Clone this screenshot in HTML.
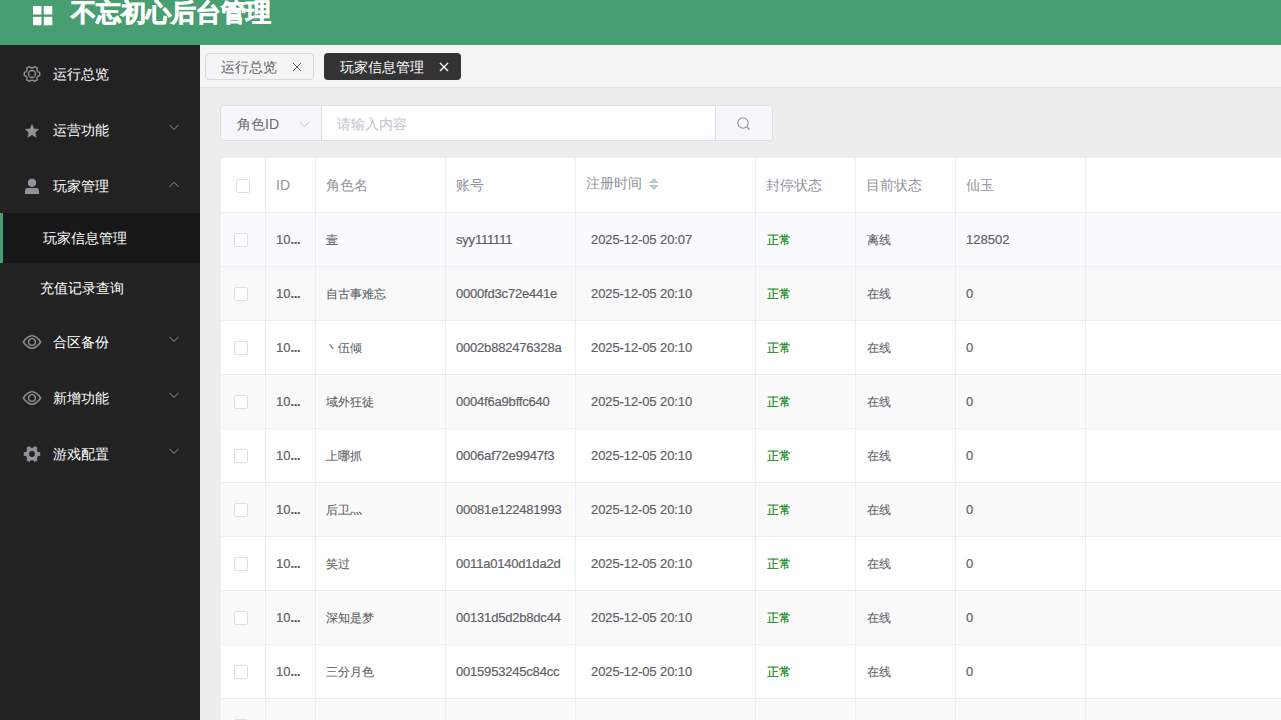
<!DOCTYPE html>
<html><head><meta charset="utf-8">
<style>
*{box-sizing:border-box;margin:0;padding:0}
html,body{width:1281px;height:720px;overflow:hidden;background:#ededed;font-family:"Liberation Sans",sans-serif}
.abs{position:absolute}
#hdr{left:0;top:0;width:1281px;height:45px;background:#479e71}
#title{left:71px;top:-3px;font-size:25px;font-weight:bold;-webkit-text-stroke:0.8px #fff;color:#fff;line-height:30px;white-space:nowrap}
#side{left:0;top:45px;width:200px;height:675px;background:#222}
.mi{position:absolute;left:0;width:200px;height:56px;color:#fff;font-size:14px}
.mi .t{position:absolute;left:53px;top:1px;line-height:56px}
.mi svg{position:absolute}
.sub{position:absolute;left:0;width:200px;height:50px;color:#fff;font-size:14px}
.sub .t{position:absolute;left:40px;top:0;line-height:50px}
#tabs{left:200px;top:45px;width:1081px;height:43px;background:#f5f5f5;border-bottom:1px solid #e0e0e0}
.tab{position:absolute;top:8px;height:27px;border-radius:4px;font-size:14px;line-height:25px}

#srch{left:220px;top:105px;width:553px;height:36px;border:1px solid #dcdfe6;border-radius:4px;background:#fff}
#tbl{left:220px;top:157px;width:1061px;height:563px;background:#fff}
.cell{position:absolute;font-size:13px;color:#606266;white-space:nowrap;-webkit-text-stroke:0.2px currentColor}
.hcell{position:absolute;font-size:14px;color:#909399;white-space:nowrap}
.vl{position:absolute;width:1px;background:#ebeef5}
.hl{position:absolute;height:1px;background:#ebeef5}
.cb{position:absolute;width:14px;height:14px;border:1px solid #dcdfe6;border-radius:2px;background:#fff}
</style></head><body>

<div id="hdr" class="abs">
<svg class="abs" style="left:33px;top:6px" width="20" height="20" viewBox="0 0 20 20" fill="#fff"><rect x="0" y="0" width="8.5" height="8.5"/><rect x="10.8" y="0" width="8.5" height="8.5"/><rect x="0" y="10.8" width="8.5" height="8.5"/><rect x="10.8" y="10.8" width="8.5" height="8.5"/></svg>
<div id="title" class="abs">不忘初心后台管理</div></div>
<div id="side" class="abs">
<div class="mi" style="top:0px"><svg style="left:23px;top:20px" width="18" height="18" viewBox="0 0 18 18"><path d="M14.97 11.00 L16.71 10.70 L16.71 7.30 L14.97 7.00 L14.74 6.41 L14.46 5.85 L14.11 5.32 L13.72 4.83 L14.33 3.17 L11.39 1.47 L10.26 2.83 L9.63 2.73 L9.00 2.70 L8.37 2.73 L7.74 2.83 L6.61 1.47 L3.67 3.17 L4.28 4.83 L3.89 5.32 L3.54 5.85 L3.26 6.41 L3.03 7.00 L1.29 7.30 L1.29 10.70 L3.03 11.00 L3.26 11.59 L3.54 12.15 L3.89 12.68 L4.28 13.17 L3.67 14.83 L6.61 16.53 L7.74 15.17 L8.37 15.27 L9.00 15.30 L9.63 15.27 L10.26 15.17 L11.39 16.53 L14.33 14.83 L13.72 13.17 L14.11 12.68 L14.46 12.15 L14.74 11.59Z" fill="none" stroke="#909399" stroke-width="1.3" stroke-linejoin="round"/><circle cx="9" cy="9" r="3.5" fill="none" stroke="#909399" stroke-width="1.3"/></svg><span class="t">运行总览</span></div>
<div class="mi" style="top:56px"><svg style="left:25px;top:22.8px" width="14" height="14" viewBox="0 0 14 14"><path d="M7.00 0.50 L8.88 4.91 L13.66 5.34 L10.04 8.49 L11.11 13.16 L7.00 10.70 L2.89 13.16 L3.96 8.49 L0.34 5.34 L5.12 4.91Z" fill="#909399" stroke="#909399" stroke-width="0.6" stroke-linejoin="round"/></svg><span class="t">运营功能</span><svg style="left:169px;top:23px" width="10" height="7" viewBox="0 0 10 7"><path d="M0.5 0.8 L5 5.5 L9.5 0.8" fill="none" stroke="#909399" stroke-width="1"/></svg></div>
<div class="mi" style="top:112px"><svg style="left:24px;top:21px" width="16" height="17" viewBox="0 0 16 17"><circle cx="8" cy="4.8" r="4.1" fill="#909399"/><path d="M1 13.2 Q1 10 4 10 L12 10 Q15 10 15 13.2 L15 16 L1 16Z" fill="#909399"/></svg><span class="t">玩家管理</span><svg style="left:169px;top:24px" width="10" height="7" viewBox="0 0 10 7"><path d="M0.5 5.8 L5 1.2 L9.5 5.8" fill="none" stroke="#909399" stroke-width="1"/></svg></div>
<div class="mi" style="top:268px"><svg style="left:22px;top:21px" width="20" height="16" viewBox="0 0 20 16"><path d="M1.3 8 Q10 -4.5 18.7 8 Q10 20.5 1.3 8Z" fill="none" stroke="#909399" stroke-width="1.4"/><circle cx="10" cy="8" r="3.4" fill="none" stroke="#909399" stroke-width="1.4"/></svg><span class="t">合区备份</span><svg style="left:169px;top:23px" width="10" height="7" viewBox="0 0 10 7"><path d="M0.5 0.8 L5 5.5 L9.5 0.8" fill="none" stroke="#909399" stroke-width="1"/></svg></div>
<div class="mi" style="top:324px"><svg style="left:22px;top:21px" width="20" height="16" viewBox="0 0 20 16"><path d="M1.3 8 Q10 -4.5 18.7 8 Q10 20.5 1.3 8Z" fill="none" stroke="#909399" stroke-width="1.4"/><circle cx="10" cy="8" r="3.4" fill="none" stroke="#909399" stroke-width="1.4"/></svg><span class="t">新增功能</span><svg style="left:169px;top:23px" width="10" height="7" viewBox="0 0 10 7"><path d="M0.5 0.8 L5 5.5 L9.5 0.8" fill="none" stroke="#909399" stroke-width="1"/></svg></div>
<div class="mi" style="top:380px"><svg style="left:23px;top:20.2px" width="18" height="18" viewBox="0 0 18 18"><path d="M14.97 11.00 L17.20 10.80 L17.20 7.20 L14.97 7.00 L14.74 6.41 L14.46 5.85 L14.11 5.32 L13.72 4.83 L14.66 2.79 L11.54 0.99 L10.26 2.83 L9.63 2.73 L9.00 2.70 L8.37 2.73 L7.74 2.83 L6.46 0.99 L3.34 2.79 L4.28 4.83 L3.89 5.32 L3.54 5.85 L3.26 6.41 L3.03 7.00 L0.80 7.20 L0.80 10.80 L3.03 11.00 L3.26 11.59 L3.54 12.15 L3.89 12.68 L4.28 13.17 L3.34 15.21 L6.46 17.01 L7.74 15.17 L8.37 15.27 L9.00 15.30 L9.63 15.27 L10.26 15.17 L11.54 17.01 L14.66 15.21 L13.72 13.17 L14.11 12.68 L14.46 12.15 L14.74 11.59Z M11.9 9 A2.9 2.9 0 1 0 6.1 9 A2.9 2.9 0 1 0 11.9 9Z" fill="#909399" fill-rule="evenodd"/></svg><span class="t">游戏配置</span><svg style="left:169px;top:23px" width="10" height="7" viewBox="0 0 10 7"><path d="M0.5 0.8 L5 5.5 L9.5 0.8" fill="none" stroke="#909399" stroke-width="1"/></svg></div>
<div class="sub" style="top:168px;background:#181818;border-left:3px solid #479e71"><span class="t" style="left:40px;color:#fff">玩家信息管理</span></div>
<div class="sub" style="top:218px"><span class="t">充值记录查询</span></div>
</div>
<div id="tabs" class="abs">
<div class="tab" style="left:5px;width:109px;border:1px solid #d9d9d9;background:#f5f5f5;color:#606266"><span class="abs" style="left:15px;top:1px">运行总览</span><svg class="abs" style="left:86px;top:8px" width="10" height="10" viewBox="0 0 10 10"><path d="M1 1L9 9M9 1L1 9" stroke="#606266" stroke-width="1"/></svg></div>
<div class="tab" style="left:124px;width:137px;background:#333;color:#fff"><span class="abs" style="left:16px;top:1.6px">玩家信息管理</span><svg class="abs" style="left:114.5px;top:8.5px" width="10" height="10" viewBox="0 0 10 10"><path d="M1 1L9 9M9 1L1 9" stroke="#fff" stroke-width="1.35"/></svg></div>
</div>
<div id="srch" class="abs">
<div class="abs" style="left:0;top:0;width:101px;height:34px;background:#f5f7fa;border-right:1px solid #dcdfe6;border-radius:4px 0 0 4px"><span class="abs" style="left:16px;top:1px;line-height:34px;font-size:14px;color:#6a6c70">角色ID</span><svg class="abs" style="left:77.5px;top:15px" width="11" height="7" viewBox="0 0 11 7"><path d="M0.5 0.8 L5.5 5.6 L10.5 0.8" fill="none" stroke="#c0c4cc" stroke-width="1"/></svg></div>
<span class="abs" style="left:116px;top:0.6px;line-height:34px;font-size:14px;color:#c0c4cc">请输入内容</span>
<div class="abs" style="left:494px;top:0;width:57px;height:34px;background:#f5f7fa;border-left:1px solid #dcdfe6;border-radius:0 4px 4px 0"><svg class="abs" style="left:21px;top:11px" width="14" height="14" viewBox="0 0 14 14"><circle cx="6" cy="6" r="5.2" fill="none" stroke="#909399" stroke-width="1.1"/><path d="M9.8 9.8 L12.5 12.5" stroke="#909399" stroke-width="1.2"/></svg></div>
</div>
<div id="tbl" class="abs">
<div class="abs" style="left:0;top:56px;width:1061px;height:53px;background:#f9fbfd"></div>
<div class="abs" style="left:0;top:110px;width:1061px;height:53px;background:#f8f9f8"></div>
<div class="abs" style="left:0;top:164px;width:1061px;height:53px;background:#fff"></div>
<div class="abs" style="left:0;top:218px;width:1061px;height:53px;background:#fafafa"></div>
<div class="abs" style="left:0;top:272px;width:1061px;height:53px;background:#fff"></div>
<div class="abs" style="left:0;top:326px;width:1061px;height:53px;background:#fafafa"></div>
<div class="abs" style="left:0;top:380px;width:1061px;height:53px;background:#fff"></div>
<div class="abs" style="left:0;top:434px;width:1061px;height:53px;background:#fafafa"></div>
<div class="abs" style="left:0;top:488px;width:1061px;height:53px;background:#fff"></div>
<div class="abs" style="left:0;top:542px;width:1061px;height:53px;background:#fafafa"></div>
<div class="hl" style="left:0;top:0;width:1061px"></div>
<div class="hl" style="left:0;top:55px;width:1061px"></div>
<div class="hl" style="left:0;top:109px;width:1061px"></div>
<div class="hl" style="left:0;top:163px;width:1061px"></div>
<div class="hl" style="left:0;top:217px;width:1061px"></div>
<div class="hl" style="left:0;top:271px;width:1061px"></div>
<div class="hl" style="left:0;top:325px;width:1061px"></div>
<div class="hl" style="left:0;top:379px;width:1061px"></div>
<div class="hl" style="left:0;top:433px;width:1061px"></div>
<div class="hl" style="left:0;top:487px;width:1061px"></div>
<div class="hl" style="left:0;top:541px;width:1061px"></div>
<div class="hl" style="left:0;top:595px;width:1061px"></div>
<div class="vl" style="left:0px;top:0;height:563px"></div>
<div class="vl" style="left:45px;top:0;height:563px"></div>
<div class="vl" style="left:95px;top:0;height:563px"></div>
<div class="vl" style="left:225px;top:0;height:563px"></div>
<div class="vl" style="left:355px;top:0;height:563px"></div>
<div class="vl" style="left:535px;top:0;height:563px"></div>
<div class="vl" style="left:635px;top:0;height:563px"></div>
<div class="vl" style="left:735px;top:0;height:563px"></div>
<div class="vl" style="left:865px;top:0;height:563px"></div>
<span class="hcell" style="left:56px;top:28px;line-height:0">ID</span>
<span class="hcell" style="left:106px;top:28px;line-height:0">角色名</span>
<span class="hcell" style="left:236px;top:28px;line-height:0">账号</span>
<span class="hcell" style="left:366px;top:26px;line-height:0">注册时间</span>
<span class="hcell" style="left:546px;top:28px;line-height:0">封停状态</span>
<span class="hcell" style="left:646px;top:28px;line-height:0">目前状态</span>
<span class="hcell" style="left:746px;top:28px;line-height:0">仙玉</span>
<svg class="abs" style="left:429px;top:21px" width="10" height="12" viewBox="0 0 10 12"><path d="M5 0 L10 5 L0 5Z M0 7 L10 7 L5 12Z" fill="#c0c4cc"/></svg>
<div class="cb" style="left:16px;top:22px"></div>
<div class="cb" style="left:14px;top:76px"></div>
<span class="cell" style="left:56px;top:83px;line-height:0;color:#606266">10<b style="letter-spacing:-0.4px;font-weight:bold">...</b></span>
<span class="cell" style="left:106px;top:83px;line-height:0;color:#606266"><span style="font-size:12.4px;-webkit-text-stroke:0.1px currentColor">壹</span></span>
<span class="cell" style="left:236px;top:83px;line-height:0;color:#606266"><span style="letter-spacing:-0.2px">syy111111</span></span>
<span class="cell" style="left:371px;top:83px;line-height:0;color:#606266"><span style="letter-spacing:-0.1px">2025-12-05 20:07</span></span>
<span class="cell" style="left:547px;top:83px;line-height:0;color:#008000"><span style="font-size:12.4px;-webkit-text-stroke:0.1px currentColor">正常</span></span>
<span class="cell" style="left:646.7px;top:83px;line-height:0;color:#606266"><span style="font-size:12.4px;-webkit-text-stroke:0.1px currentColor">离线</span></span>
<span class="cell" style="left:746px;top:83px;line-height:0;color:#606266">128502</span>
<div class="cb" style="left:14px;top:130px"></div>
<span class="cell" style="left:56px;top:137px;line-height:0;color:#606266">10<b style="letter-spacing:-0.4px;font-weight:bold">...</b></span>
<span class="cell" style="left:106px;top:137px;line-height:0;color:#606266"><span style="font-size:12.4px;-webkit-text-stroke:0.1px currentColor">自古事难忘</span></span>
<span class="cell" style="left:236px;top:137px;line-height:0;color:#606266"><span style="letter-spacing:-0.2px">0000fd3c72e441e</span></span>
<span class="cell" style="left:371px;top:137px;line-height:0;color:#606266"><span style="letter-spacing:-0.1px">2025-12-05 20:10</span></span>
<span class="cell" style="left:547px;top:137px;line-height:0;color:#008000"><span style="font-size:12.4px;-webkit-text-stroke:0.1px currentColor">正常</span></span>
<span class="cell" style="left:646.7px;top:137px;line-height:0;color:#606266"><span style="font-size:12.4px;-webkit-text-stroke:0.1px currentColor">在线</span></span>
<span class="cell" style="left:746px;top:137px;line-height:0;color:#606266">0</span>
<div class="cb" style="left:14px;top:184px"></div>
<span class="cell" style="left:56px;top:191px;line-height:0;color:#606266">10<b style="letter-spacing:-0.4px;font-weight:bold">...</b></span>
<span class="cell" style="left:106px;top:191px;line-height:0;color:#606266"><span style="font-size:12.4px;-webkit-text-stroke:0.1px currentColor">丶伍倾</span></span>
<span class="cell" style="left:236px;top:191px;line-height:0;color:#606266"><span style="letter-spacing:-0.2px">0002b882476328a</span></span>
<span class="cell" style="left:371px;top:191px;line-height:0;color:#606266"><span style="letter-spacing:-0.1px">2025-12-05 20:10</span></span>
<span class="cell" style="left:547px;top:191px;line-height:0;color:#008000"><span style="font-size:12.4px;-webkit-text-stroke:0.1px currentColor">正常</span></span>
<span class="cell" style="left:646.7px;top:191px;line-height:0;color:#606266"><span style="font-size:12.4px;-webkit-text-stroke:0.1px currentColor">在线</span></span>
<span class="cell" style="left:746px;top:191px;line-height:0;color:#606266">0</span>
<div class="cb" style="left:14px;top:238px"></div>
<span class="cell" style="left:56px;top:245px;line-height:0;color:#606266">10<b style="letter-spacing:-0.4px;font-weight:bold">...</b></span>
<span class="cell" style="left:106px;top:245px;line-height:0;color:#606266"><span style="font-size:12.4px;-webkit-text-stroke:0.1px currentColor">域外狂徒</span></span>
<span class="cell" style="left:236px;top:245px;line-height:0;color:#606266"><span style="letter-spacing:-0.2px">0004f6a9bffc640</span></span>
<span class="cell" style="left:371px;top:245px;line-height:0;color:#606266"><span style="letter-spacing:-0.1px">2025-12-05 20:10</span></span>
<span class="cell" style="left:547px;top:245px;line-height:0;color:#008000"><span style="font-size:12.4px;-webkit-text-stroke:0.1px currentColor">正常</span></span>
<span class="cell" style="left:646.7px;top:245px;line-height:0;color:#606266"><span style="font-size:12.4px;-webkit-text-stroke:0.1px currentColor">在线</span></span>
<span class="cell" style="left:746px;top:245px;line-height:0;color:#606266">0</span>
<div class="cb" style="left:14px;top:292px"></div>
<span class="cell" style="left:56px;top:299px;line-height:0;color:#606266">10<b style="letter-spacing:-0.4px;font-weight:bold">...</b></span>
<span class="cell" style="left:106px;top:299px;line-height:0;color:#606266"><span style="font-size:12.4px;-webkit-text-stroke:0.1px currentColor">上哪抓</span></span>
<span class="cell" style="left:236px;top:299px;line-height:0;color:#606266"><span style="letter-spacing:-0.2px">0006af72e9947f3</span></span>
<span class="cell" style="left:371px;top:299px;line-height:0;color:#606266"><span style="letter-spacing:-0.1px">2025-12-05 20:10</span></span>
<span class="cell" style="left:547px;top:299px;line-height:0;color:#008000"><span style="font-size:12.4px;-webkit-text-stroke:0.1px currentColor">正常</span></span>
<span class="cell" style="left:646.7px;top:299px;line-height:0;color:#606266"><span style="font-size:12.4px;-webkit-text-stroke:0.1px currentColor">在线</span></span>
<span class="cell" style="left:746px;top:299px;line-height:0;color:#606266">0</span>
<div class="cb" style="left:14px;top:346px"></div>
<span class="cell" style="left:56px;top:353px;line-height:0;color:#606266">10<b style="letter-spacing:-0.4px;font-weight:bold">...</b></span>
<span class="cell" style="left:106px;top:353px;line-height:0;color:#606266"><span style="font-size:12.4px;-webkit-text-stroke:0.1px currentColor">后卫灬</span></span>
<span class="cell" style="left:236px;top:353px;line-height:0;color:#606266"><span style="letter-spacing:-0.2px">00081e122481993</span></span>
<span class="cell" style="left:371px;top:353px;line-height:0;color:#606266"><span style="letter-spacing:-0.1px">2025-12-05 20:10</span></span>
<span class="cell" style="left:547px;top:353px;line-height:0;color:#008000"><span style="font-size:12.4px;-webkit-text-stroke:0.1px currentColor">正常</span></span>
<span class="cell" style="left:646.7px;top:353px;line-height:0;color:#606266"><span style="font-size:12.4px;-webkit-text-stroke:0.1px currentColor">在线</span></span>
<span class="cell" style="left:746px;top:353px;line-height:0;color:#606266">0</span>
<div class="cb" style="left:14px;top:400px"></div>
<span class="cell" style="left:56px;top:407px;line-height:0;color:#606266">10<b style="letter-spacing:-0.4px;font-weight:bold">...</b></span>
<span class="cell" style="left:106px;top:407px;line-height:0;color:#606266"><span style="font-size:12.4px;-webkit-text-stroke:0.1px currentColor">笑过</span></span>
<span class="cell" style="left:236px;top:407px;line-height:0;color:#606266"><span style="letter-spacing:-0.2px">0011a0140d1da2d</span></span>
<span class="cell" style="left:371px;top:407px;line-height:0;color:#606266"><span style="letter-spacing:-0.1px">2025-12-05 20:10</span></span>
<span class="cell" style="left:547px;top:407px;line-height:0;color:#008000"><span style="font-size:12.4px;-webkit-text-stroke:0.1px currentColor">正常</span></span>
<span class="cell" style="left:646.7px;top:407px;line-height:0;color:#606266"><span style="font-size:12.4px;-webkit-text-stroke:0.1px currentColor">在线</span></span>
<span class="cell" style="left:746px;top:407px;line-height:0;color:#606266">0</span>
<div class="cb" style="left:14px;top:454px"></div>
<span class="cell" style="left:56px;top:461px;line-height:0;color:#606266">10<b style="letter-spacing:-0.4px;font-weight:bold">...</b></span>
<span class="cell" style="left:106px;top:461px;line-height:0;color:#606266"><span style="font-size:12.4px;-webkit-text-stroke:0.1px currentColor">深知是梦</span></span>
<span class="cell" style="left:236px;top:461px;line-height:0;color:#606266"><span style="letter-spacing:-0.2px">00131d5d2b8dc44</span></span>
<span class="cell" style="left:371px;top:461px;line-height:0;color:#606266"><span style="letter-spacing:-0.1px">2025-12-05 20:10</span></span>
<span class="cell" style="left:547px;top:461px;line-height:0;color:#008000"><span style="font-size:12.4px;-webkit-text-stroke:0.1px currentColor">正常</span></span>
<span class="cell" style="left:646.7px;top:461px;line-height:0;color:#606266"><span style="font-size:12.4px;-webkit-text-stroke:0.1px currentColor">在线</span></span>
<span class="cell" style="left:746px;top:461px;line-height:0;color:#606266">0</span>
<div class="cb" style="left:14px;top:508px"></div>
<span class="cell" style="left:56px;top:515px;line-height:0;color:#606266">10<b style="letter-spacing:-0.4px;font-weight:bold">...</b></span>
<span class="cell" style="left:106px;top:515px;line-height:0;color:#606266"><span style="font-size:12.4px;-webkit-text-stroke:0.1px currentColor">三分月色</span></span>
<span class="cell" style="left:236px;top:515px;line-height:0;color:#606266"><span style="letter-spacing:-0.2px">0015953245c84cc</span></span>
<span class="cell" style="left:371px;top:515px;line-height:0;color:#606266"><span style="letter-spacing:-0.1px">2025-12-05 20:10</span></span>
<span class="cell" style="left:547px;top:515px;line-height:0;color:#008000"><span style="font-size:12.4px;-webkit-text-stroke:0.1px currentColor">正常</span></span>
<span class="cell" style="left:646.7px;top:515px;line-height:0;color:#606266"><span style="font-size:12.4px;-webkit-text-stroke:0.1px currentColor">在线</span></span>
<span class="cell" style="left:746px;top:515px;line-height:0;color:#606266">0</span>
<div class="cb" style="left:14px;top:562px"></div>
</div>
</body></html>
